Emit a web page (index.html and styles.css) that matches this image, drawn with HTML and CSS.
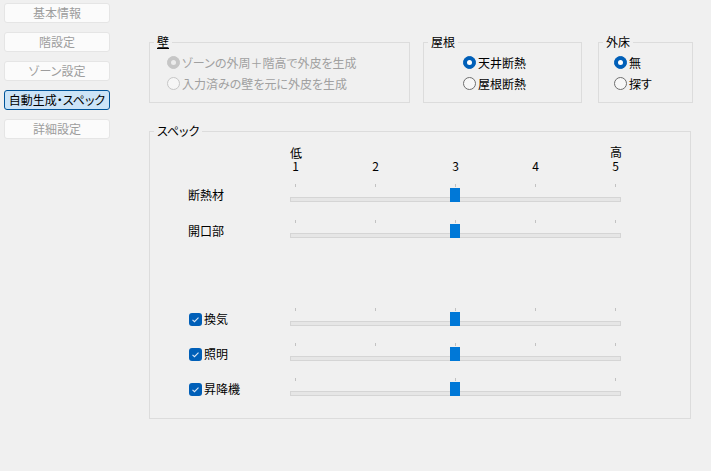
FILE: index.html
```html
<!DOCTYPE html>
<html lang="ja">
<head>
  <meta charset="UTF-8" />
  <meta name="viewport" content="width=device-width, initial-scale=1.0" />
  <title>自動生成・スペック</title>
  <link rel="stylesheet" href="styles.css">
</head>
<body>

  <div class="app">
    <!-- Left navigation -->
    <nav class="sidebar">
      <button class="nav-btn" disabled>基本情報</button>
      <button class="nav-btn" disabled>階設定</button>
      <button class="nav-btn" disabled>ゾーン設定</button>
      <button class="nav-btn active">自動生成・スペック</button>
      <button class="nav-btn" disabled>詳細設定</button>
    </nav>

    <main class="main">
      <div class="top-row">
        <!-- Wall -->
        <fieldset class="group wall">
          <legend><u>壁</u></legend>
          <div class="opts">
            <label class="opt disabled"><span class="radio checked"></span>ゾーンの外周＋階高で外皮を生成</label>
            <label class="opt disabled"><span class="radio"></span>入力済みの壁を元に外皮を生成</label>
          </div>
        </fieldset>

        <!-- Roof -->
        <fieldset class="group roof">
          <legend>屋根</legend>
          <div class="opts">
            <label class="opt"><span class="radio checked"></span>天井断熱</label>
            <label class="opt"><span class="radio"></span>屋根断熱</label>
          </div>
        </fieldset>

        <!-- Floor -->
        <fieldset class="group floor">
          <legend>外床</legend>
          <div class="opts">
            <label class="opt"><span class="radio checked"></span>無</label>
            <label class="opt"><span class="radio"></span>探す</label>
          </div>
        </fieldset>
      </div>

      <!-- Spec sliders -->
      <fieldset class="group spec">
        <legend>スペック</legend>
        <div class="spec-body">
          <div class="scale-head"><span>低</span><span class="high">高</span></div>
          <div class="scale-nums"><span>1</span><span>2</span><span>3</span><span>4</span><span>5</span></div>

          <div class="rows">
            <div class="row">
              <span class="row-label">断熱材</span>
              <div class="slider">
                <div class="ticks"><i></i><i></i><i></i><i></i><i></i></div>
                <div class="rail"><div class="track"></div><div class="thumb"></div></div>
              </div>
            </div>
            <div class="row">
              <span class="row-label">開口部</span>
              <div class="slider">
                <div class="ticks"><i></i><i></i><i></i><i></i><i></i></div>
                <div class="rail"><div class="track"></div><div class="thumb"></div></div>
              </div>
            </div>
          </div>

          <div class="rows optional">
            <div class="row">
              <label class="row-label"><span class="check"><svg viewBox="0 0 13 13"><polyline points="3.5,6.8 5.5,8.7 9.5,4.6" /></svg></span>換気</label>
              <div class="slider">
                <div class="ticks"><i></i><i></i><i></i><i></i><i></i></div>
                <div class="rail"><div class="track"></div><div class="thumb"></div></div>
              </div>
            </div>
            <div class="row">
              <label class="row-label"><span class="check"><svg viewBox="0 0 13 13"><polyline points="3.5,6.8 5.5,8.7 9.5,4.6" /></svg></span>照明</label>
              <div class="slider">
                <div class="ticks"><i></i><i></i><i></i><i></i><i></i></div>
                <div class="rail"><div class="track"></div><div class="thumb"></div></div>
              </div>
            </div>
            <div class="row">
              <label class="row-label"><span class="check"><svg viewBox="0 0 13 13"><polyline points="3.5,6.8 5.5,8.7 9.5,4.6" /></svg></span>昇降機</label>
              <div class="slider">
                <div class="ticks"><i></i><i></i><i></i></div>
                <div class="rail"><div class="track"></div><div class="thumb"></div></div>
              </div>
            </div>
          </div>
        </div>
      </fieldset>
    </main>
  </div>

</body>
</html>
```

FILE: styles.css
```css
* {
  box-sizing: border-box;
}

body {
  margin: 0;
  background-color: #f0f0f0;
  font-family: "Noto Sans CJK JP", "Noto Sans", sans-serif;
  font-size: 12px;
  font-feature-settings: "palt";
  color: #000;
}

.app {
  display: flex;
  align-items: flex-start;
}

/* Sidebar */
.sidebar {
  display: flex;
  flex-direction: column;
  gap: 9px;
  padding: 3px 0 0 4px;
}

.nav-btn {
  width: 106px;
  height: 20px;
  padding: 0;
  font: inherit;
  line-height: 18px;
  white-space: nowrap;
  background-color: #fbfbfb;
  color: #9d9d9d;
  border: 1px solid #e5e5e5;
  border-radius: 3px;
}

.nav-btn.active {
  background-color: #cce4f7;
  border-color: #005499;
  color: #000;
}

/* Main area */
.main {
  margin-left: 39px;
  padding-top: 34px;
}

.top-row {
  display: flex;
  gap: 13px;
}

.group {
  margin: 0;
  min-width: 0;
  padding: 0;
  border: 1px solid #dcdcdc;
}

.group legend {
  margin-left: 4px;
  padding: 0 3px;
  line-height: 16px;
}

.opts {
  padding: 2px 0 8px;
}

.wall {
  width: 261px;
}

.wall .opts {
  padding-left: 17px;
}

.roof {
  width: 159px;
}

.roof .opts {
  padding-left: 39px;
}

.floor {
  width: 95px;
  margin-left: 3px;
}

.floor .opts {
  padding-left: 15px;
}

.opt {
  display: flex;
  align-items: center;
  gap: 2px;
  height: 21px;
  white-space: nowrap;
}

.radio {
  position: relative;
  flex: none;
  width: 13px;
  height: 13px;
  border: 1px solid #6e6e6e;
  border-radius: 50%;
  background-color: #f7f7f7;
}

.radio.checked {
  background-color: #005fb8;
  border-color: #005fb8;
}

.radio.checked::after {
  content: "";
  position: absolute;
  left: 3px;
  top: 3px;
  width: 5px;
  height: 5px;
  border-radius: 50%;
  background-color: #fff;
}

.opt.disabled {
  color: #a0a0a0;
}

.opt.disabled .radio {
  border-color: #c6c6c6;
  background-color: #f6f6f6;
}

.opt.disabled .radio.checked {
  background-color: #c6c6c6;
}

.opt.disabled .radio.checked::after {
  background-color: #ececec;
}

/* Spec sliders */
.spec {
  width: 542px;
  margin-top: 20px;
}

.spec-body {
  padding: 8px 0 22px 38px;
}

.scale-head {
  display: flex;
  justify-content: space-between;
  width: 332px;
  margin-left: 102px;
  line-height: 12px;
}

.scale-head .high {
  position: relative;
  top: -1px;
}

.scale-nums {
  display: flex;
  justify-content: space-between;
  width: 331px;
  margin-left: 102px;
  padding: 0 0.5px;
  line-height: 13px;
}

.scale-nums span {
  width: 10px;
  text-align: center;
}

.rows {
  display: flex;
  flex-direction: column;
  gap: 18px;
  margin-top: 12px;
}

.rows.optional {
  gap: 17px;
  margin-top: 70px;
}

.row {
  display: flex;
  align-items: flex-end;
}

.row-label {
  display: flex;
  align-items: center;
  gap: 2px;
  width: 102px;
  height: 14px;
  line-height: 14px;
}

.check {
  display: inline-flex;
  width: 13px;
  height: 13px;
  margin-left: 1px;
  border-radius: 3px;
  background-color: #005fb8;
}

.check svg {
  width: 13px;
  height: 13px;
  fill: none;
  stroke: #dce8f6;
  stroke-width: 1.1;
}

.slider {
  width: 331px;
}

.ticks {
  display: flex;
  justify-content: space-between;
  height: 3px;
  margin-bottom: 1px;
  padding: 0 5px;
}

.ticks i {
  width: 1px;
  height: 3px;
  background-color: #c2c2c2;
}

.rail {
  position: relative;
  height: 14px;
  padding-top: 9px;
}

.track {
  height: 5px;
  border: 1px solid #d5d5d5;
  background-color: #e6e6e6;
}

.thumb {
  position: absolute;
  top: 0;
  left: 160px;
  width: 10px;
  height: 14px;
  background-color: #0078d7;
}
```
